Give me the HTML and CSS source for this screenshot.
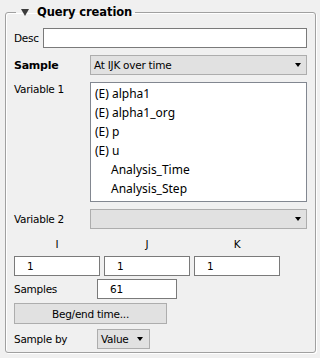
FILE: index.html
```html
<!DOCTYPE html>
<html>
<head>
<meta charset="utf-8">
<link rel="stylesheet" href="styles.css">
</head>
<body>
<fieldset class="group">
  <legend class="legend"><span class="tri"></span><span class="title">Query creation</span></legend>
  <div class="row desc-row">
    <span class="lbl">Desc</span>
    <span class="input wide"></span>
  </div>
  <div class="row form-row">
    <span class="lbl bold">Sample</span>
    <span class="combo"><span class="combo-text">At IJK over time</span><span class="arrow"></span></span>
  </div>
  <div class="row form-row top">
    <span class="lbl var1">Variable 1</span>
    <div class="list">
      <div class="item">(E) alpha1</div>
      <div class="item">(E) alpha1_org</div>
      <div class="item">(E) p</div>
      <div class="item">(E) u</div>
      <div class="item indent">Analysis_Time</div>
      <div class="item indent">Analysis_Step</div>
    </div>
  </div>
  <div class="row form-row">
    <span class="lbl">Variable 2</span>
    <span class="combo"><span class="combo-text"></span><span class="arrow"></span></span>
  </div>
  <div class="ijk">
    <span class="axis">I</span>
    <span class="axis">J</span>
    <span class="axis">K</span>
    <span class="input num">1</span>
    <span class="input num">1</span>
    <span class="input num">1</span>
  </div>
  <div class="row short-row">
    <span class="lbl">Samples</span>
    <span class="input samples">61</span>
  </div>
  <div class="btn">Beg/end time...</div>
  <div class="row short-row last">
    <span class="lbl">Sample by</span>
    <span class="combo small"><span class="combo-text">Value</span><span class="arrow"></span></span>
  </div>
</fieldset>
</body>
</html>
```
FILE: styles.css
```css
html, body {
  margin: 0;
  padding: 0;
  background: #f0f0f0;
}
body {
  font-family: "DejaVu Sans", sans-serif;
  font-size: 10.5px;
  letter-spacing: -0.25px;
  color: #000;
  width: 320px;
  height: 358px;
  overflow: hidden;
}
.group {
  box-sizing: border-box;
  margin: 5px 0 0 5px;
  width: 311px;
  height: 348px;
  border: 1px solid #a0a0a0;
  border-radius: 3px;
  box-shadow: inset 1px 1px 0 #fff, 1px 1px 0 #fff;
  padding: 8px 8px 0 8px;
  display: flex;
  flex-direction: column;
}
.legend {
  padding: 0 3px;
  margin-left: 2px;
  display: flex;
  align-items: center;
  gap: 8px;
}
.tri {
  width: 0;
  height: 0;
  margin-left: 2px;
  border-left: 4.5px solid transparent;
  border-right: 4.5px solid transparent;
  border-top: 7px solid #3c3c3c;
}
.title {
  font-weight: bold;
  font-size: 11.5px;
  letter-spacing: -0.1px;
}
.row {
  display: flex;
  align-items: center;
}
.desc-row {
  margin-top: 1px;
}
.desc-row .lbl {
  width: 29px;
  flex: none;
}
.form-row {
  margin-top: 7px;
}
.form-row .lbl {
  width: 76px;
  flex: none;
}
.form-row.top {
  align-items: flex-start;
}
.var1 {
  margin-top: 1px;
}
.bold {
  font-weight: bold;
  font-size: 11px;
}
.input {
  box-sizing: border-box;
  height: 20px;
  background: #fff;
  border: 1px solid #7a7a7a;
  display: flex;
  align-items: center;
}
.wide {
  flex: 1;
}
.combo {
  box-sizing: border-box;
  flex: 1;
  height: 20px;
  background: #e1e1e1;
  border: 1px solid #adadad;
  display: flex;
  align-items: center;
  padding: 0 5px 0 3px;
}
.combo-text {
  flex: 1;
}
.arrow {
  width: 0;
  height: 0;
  border-left: 3.5px solid transparent;
  border-right: 3.5px solid transparent;
  border-top: 4px solid #000;
}
.list {
  box-sizing: border-box;
  flex: 1;
  height: 120px;
  background: #fff;
  border: 1px solid #828790;
  padding: 1px 0 0 4px;
  font-family: "Noto Sans", sans-serif;
  font-size: 12px;
  letter-spacing: 0;
}
.item {
  height: 19px;
  line-height: 19px;
}
.indent {
  padding-left: 16px;
}
.ijk {
  display: grid;
  grid-template-columns: 86px 86px 86px;
  column-gap: 4px;
  row-gap: 6px;
  margin-top: 9px;
}
.axis {
  text-align: center;
  height: 12px;
  line-height: 12px;
}
.num {
  padding-left: 12px;
}
.short-row .lbl {
  width: 83px;
  flex: none;
}
.short-row {
  margin-top: 3px;
}
.samples {
  width: 80px;
  padding-left: 12px;
}
.btn {
  box-sizing: border-box;
  width: 153px;
  height: 21px;
  margin-top: 4px;
  background: #e1e1e1;
  border: 1px solid #adadad;
  display: flex;
  align-items: center;
  justify-content: center;
}
.short-row.last {
  margin-top: 5px;
}
.small {
  flex: none;
  width: 53px;
  padding-right: 6px;
}
```
